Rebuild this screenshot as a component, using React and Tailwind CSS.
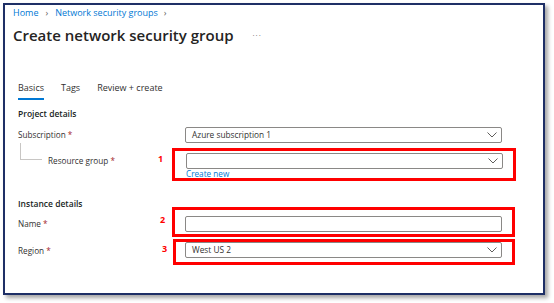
import React from "react";

const Chevron = () => (
  <svg width="10" height="6" viewBox="0 0 10 6" fill="none">
    <path d="M0.5 0.5 L5 5 L9.5 0.5" stroke="#605e5c" strokeWidth="1" />
  </svg>
);

const Dropdown = ({ value, chevron = true }) => (
  <div className="w-[317px] h-[16px] border border-[#8a8886] rounded-[2px] flex items-center justify-between pl-[6px] pr-[4px] bg-white">
    <span className="text-[8.3px] leading-[12px] text-[#323130]">{value}</span>
    {chevron && <Chevron />}
  </div>
);

const Req = () => <span className="text-[#a4262c]"> *</span>;

export default function App() {
  return (
    <div className="pl-[3px] pt-[3px] bg-white w-[554px] h-[303px]" style={{ fontFamily: '"Open Sans", "Noto Sans", sans-serif' }}>
      <div className="w-[542px] h-[292px] border-2 border-[#1e2f66] bg-white shadow-[3px_3px_4px_rgba(0,0,0,0.35)] text-[#323130]">
        {/* breadcrumb */}
        <div className="pt-[1px] pl-[8px] h-[15px] flex items-center text-[9px] leading-[14px] text-[#0078d4]">
          <span>Home</span>
          <span className="mx-[7px] text-[#605e5c]">›</span>
          <span>Network security groups</span>
          <span className="ml-[6px] text-[#605e5c]">›</span>
        </div>
        {/* title */}
        <div className="mt-[4px] pl-[8px] h-[22px] flex items-center">
          <span className="text-[15px] leading-[22px] font-semibold text-[#252423]">Create network security group</span>
          <span className="ml-[19px] text-[8px] text-[#605e5c] tracking-[1px]">···</span>
        </div>
        {/* tabs */}
        <div className="mt-[36px] pl-[13px] flex gap-[17px] text-[9px] leading-[12px]">
          <div className="pb-[4px] border-b-2 border-[#0078d4]">Basics</div>
          <div className="pb-[4px] border-b-2 border-transparent">Tags</div>
          <div className="pb-[4px] border-b-2 border-transparent">Review + create</div>
        </div>
        {/* form */}
        <div className="pl-[13px]">
          <div className="mt-[8px] h-[12px] text-[8.5px] leading-[12px] font-semibold text-[#201f1e]">Project details</div>
          {/* Subscription */}
          <div className="mt-[7px] flex items-center h-[16px]">
            <div className="w-[136px] text-[8.2px] leading-[12px]">Subscription<Req /></div>
            <div className="w-[17px]" />
            <div className="ml-[14px]">
              <Dropdown value="Azure subscription 1" />
            </div>
          </div>
          {/* Resource group */}
          <div className="mt-[5px] flex items-start h-[33px]">
            <div className="w-[136px] flex items-start">
              <div className="ml-[2px] mt-[-5px] w-[22px] h-[17px] border-l border-b border-[#c8c6c4]" />
              <div className="ml-[6px] mt-[7px] text-[8.2px] leading-[12px]">Resource group<Req /></div>
            </div>
            <div className="w-[18px] pl-[4px] mt-[5px] text-[9px] leading-[12px] font-bold text-[#ff0000]">1</div>
            <div className="w-[344px] h-[33px] border-[3px] border-[#ff0000] pl-[11px] pt-[2px]">
              <Dropdown value="" />
              <div className="mt-[1px] text-[8.2px] leading-[8px] text-[#0078d4]">Create new</div>
            </div>
          </div>
          {/* Instance details + Name */}
          <div className="mt-[17px] flex items-start">
            <div className="w-[136px]">
              <div className="h-[12px] text-[8.5px] leading-[12px] font-semibold text-[#201f1e]">Instance details</div>
              <div className="mt-[8px] text-[8.2px] leading-[12px]">Name<Req /></div>
            </div>
            <div className="w-[18px] pl-[6px] mt-[16px] text-[9px] leading-[12px] font-bold text-[#ff0000]">2</div>
            <div className="mt-[9px] w-[343px] h-[30px] border-[3px] border-[#ff0000] pl-[10px] pt-[6px]">
              <Dropdown value="" chevron={false} />
            </div>
          </div>
          {/* Region */}
          <div className="mt-[2px] flex items-start">
            <div className="w-[136px] mt-[6px] text-[8.2px] leading-[12px]">Region<Req /></div>
            <div className="w-[19px] pl-[8px] mt-[4px] text-[9px] leading-[12px] font-bold text-[#ff0000]">3</div>
            <div className="w-[342px] h-[26px] border-[3px] border-[#ff0000] pl-[9px]">
              <Dropdown value="West US 2" />
            </div>
          </div>
        </div>
      </div>
    </div>
  );
}
